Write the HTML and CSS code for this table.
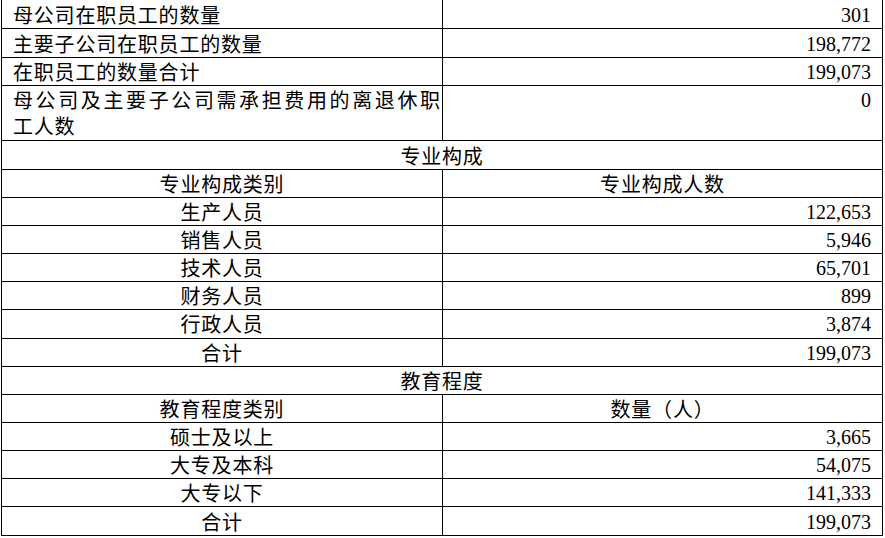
FILE: index.html
```html
<!DOCTYPE html>
<html lang="zh-CN">
<head>
<meta charset="utf-8">
<title>员工情况</title>
<link rel="stylesheet" href="styles.css">
</head>
<body>
<table class="staff">
  <colgroup><col class="c1"><col class="c2"></colgroup>
  <tbody>
    <tr class="first"><td class="label">母公司在职员工的数量</td><td class="num">301</td></tr>
    <tr><td class="label">主要子公司在职员工的数量</td><td class="num">198,772</td></tr>
    <tr><td class="label">在职员工的数量合计</td><td class="num">199,073</td></tr>
    <tr class="tall"><td class="label"><div class="jline">母公司及主要子公司需承担费用的离退休职</div><div>工人数</div></td><td class="num top">0</td></tr>
    <tr><td class="head" colspan="2">专业构成</td></tr>
    <tr><td class="head">专业构成类别</td><td class="head">专业构成人数</td></tr>
    <tr><td class="head">生产人员</td><td class="num">122,653</td></tr>
    <tr><td class="head">销售人员</td><td class="num">5,946</td></tr>
    <tr><td class="head">技术人员</td><td class="num">65,701</td></tr>
    <tr><td class="head">财务人员</td><td class="num">899</td></tr>
    <tr><td class="head">行政人员</td><td class="num">3,874</td></tr>
    <tr><td class="head">合计</td><td class="num">199,073</td></tr>
    <tr><td class="head" colspan="2">教育程度</td></tr>
    <tr><td class="head">教育程度类别</td><td class="head">数量（人）</td></tr>
    <tr><td class="head">硕士及以上</td><td class="num">3,665</td></tr>
    <tr><td class="head">大专及本科</td><td class="num">54,075</td></tr>
    <tr><td class="head">大专以下</td><td class="num">141,333</td></tr>
    <tr><td class="head">合计</td><td class="num">199,073</td></tr>
  </tbody>
</table>
</body>
</html>
```
FILE: styles.css
```css
html, body {
  margin: 0;
  padding: 0;
  background: #fff;
}
body {
  padding-left: 1px;
  overflow: hidden;
}
.staff {
  border-collapse: collapse;
  table-layout: fixed;
  width: 881px;
  margin-top: -1px;
  color: #000;
  font-family: "Liberation Serif", "Noto Sans CJK SC", serif;
  font-size: 20px;
}
.c1 { width: 441px; }
.c2 { width: 440px; }
.staff td {
  box-sizing: content-box;
  border: 1px solid #000;
  padding: 1px 11px 0 11px;
  line-height: 26px;
  height: 26.16px;
  vertical-align: middle;
  white-space: nowrap;
  overflow: hidden;
}
.staff tr.first td {
  padding-top: 2.3px;
}
.label {
  text-align: left;
  font-family: "Noto Sans CJK SC", sans-serif;
  letter-spacing: 0.8px;
}
.head {
  text-align: center;
  font-family: "Noto Sans CJK SC", sans-serif;
  letter-spacing: 0.8px;
}
.num {
  text-align: right;
}
.staff td.top {
  vertical-align: top;
}
.staff tr.tall td {
  height: 52px;
  padding-top: 1.7px;
  padding-bottom: 1px;
}
.jline {
  text-align: justify;
  text-align-last: justify;
  margin-right: -9px;
  letter-spacing: 0;
}
```
